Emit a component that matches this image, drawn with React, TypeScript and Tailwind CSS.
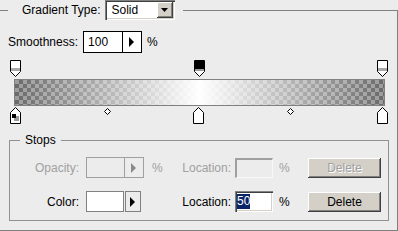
import React from 'react';

const sunken =
  'shadow-[inset_1px_1px_#808080,inset_2px_2px_#404040,inset_-1px_-1px_#fff,inset_-2px_-2px_#d4d0c8]';
const raised =
  'shadow-[inset_-1px_-1px_#404040,inset_1px_1px_#fff,inset_-2px_-2px_#808080]';

function TopStop({ selected }: { selected?: boolean }) {
  return (
    <svg width="11" height="17" viewBox="0 0 11 17">
      <path d="M0.5 0.5H10.5V11.5L5.5 16.5L0.5 11.5Z" fill="#fff" stroke="#000" />
      {selected ? (
        <>
          <rect x="1" y="1" width="9" height="8" fill="#000" />
          <rect x="1" y="9" width="9" height="2" fill="#9a9a9a" />
        </>
      ) : (
        <rect x="1" y="8" width="9" height="3" fill="#a8a8a8" />
      )}
    </svg>
  );
}

function BottomStop({ fg }: { fg?: boolean }) {
  return (
    <svg width="12" height="17" viewBox="0 0 12 17">
      <path d="M5.5 0.5L10.5 5.5V16.5H0.5V5.5Z" fill="#fff" stroke="#000" />
      {fg && (
        <>
          <rect x="4" y="9" width="5" height="5" fill="#999" />
          <rect x="2" y="7" width="4" height="4" fill="#000" />
        </>
      )}
    </svg>
  );
}

function Diamond() {
  return (
    <svg width="7" height="7" viewBox="0 0 7 7">
      <path d="M3.5 0.5L6.5 3.5L3.5 6.5L0.5 3.5Z" fill="#fff" stroke="#000" />
    </svg>
  );
}

function RightArrow({ color = '#000' }: { color?: string }) {
  return (
    <svg width="6" height="10" viewBox="0 0 6 10">
      <path d="M0 0L5 5L0 10Z" fill={color} />
    </svg>
  );
}

export default function App() {
  return (
    <div className="w-[398px] h-[231px] overflow-hidden bg-[#ececec] text-[12px] leading-[14px] text-black font-['Liberation_Sans',Arial,sans-serif]">
      <fieldset className="w-[398px] h-[231px] border-t border-r border-b border-[#808080]">
        <legend className="ml-[8px] pl-[14px] pr-[8px]">
          <div className="flex items-center h-[20px]">
            <span>Gradient Type:</span>
            <div className={`ml-[4px] w-[70px] h-[20px] bg-white flex items-center ${sunken}`}>
              <span className="flex-1 pl-[7px]">Solid</span>
              <div className={`w-[16px] h-[16px] mr-[2px] bg-[#d4d0c8] flex items-center justify-center ${raised}`}>
                <svg width="7" height="4" viewBox="0 0 7 4">
                  <path d="M0 0H7L3.5 4Z" fill="#000" />
                </svg>
              </div>
            </div>
          </div>
        </legend>

        {/* smoothness */}
        <div className="flex items-center pl-[8px] mt-[11px] h-[22px]">
          <span>Smoothness:</span>
          <div className="ml-[5px] w-[59px] h-[22px] bg-white border border-black flex">
            <span className="flex-1 pl-[4px] flex items-center">100</span>
            <div className="w-[19px] border-l border-black flex items-center justify-center">
              <RightArrow />
            </div>
          </div>
          <span className="ml-[5px]">%</span>
        </div>

        {/* gradient bar */}
        <div className="mt-[5px] flex flex-col">
          <div className="relative h-[21px]">
            <div className="absolute left-[10px] top-[2px] flex"><TopStop /></div>
            <div className="absolute left-[194px] top-[2px] flex"><TopStop selected /></div>
            <div className="absolute left-[377px] top-[2px] flex"><TopStop /></div>
          </div>
          <div className="ml-[14px] w-[371px] h-[27px] border border-[#808080] bg-[image:conic-gradient(#6a6a6a_90deg,#9c9c9c_90deg_180deg,#6a6a6a_180deg_270deg,#9c9c9c_270deg)] bg-[length:8px_8px]">
            <div className="w-full h-full bg-[image:linear-gradient(to_right,rgba(255,255,255,0),#fff_50%,rgba(255,255,255,0))]" />
          </div>
          <div className="relative h-[19px]">
            <div className="absolute left-[10px] top-[1px] flex"><BottomStop fg /></div>
            <div className="absolute left-[104px] top-[2px] flex"><Diamond /></div>
            <div className="absolute left-[193px] top-[1px] flex"><BottomStop /></div>
            <div className="absolute left-[287px] top-[2px] flex"><Diamond /></div>
            <div className="absolute left-[377px] top-[1px] flex"><BottomStop /></div>
          </div>
        </div>

        {/* stops */}
        <fieldset className="mt-[8px] ml-[9px] w-[380px] border border-[#919191] pb-[8px]">
          <legend className="ml-[10px] px-[5px]">Stops</legend>

          <div className="mt-[10px] flex items-center h-[21px] text-[#a0a0a0]">
            <span className="w-[69px] text-right">Opacity:</span>
            <div className="ml-[7px] w-[58px] h-[21px] border border-[#a0a0a0] flex">
              <span className="flex-1" />
              <div className="w-[19px] border-l border-[#a0a0a0] flex items-center justify-center">
                <RightArrow color="#8a8a8a" />
              </div>
            </div>
            <span className="w-[32px] pl-[8px]">%</span>
            <span className="w-[55px] text-right">Location:</span>
            <div className="ml-[4px] w-[38px] h-[20px] border-t-2 border-l-2 border-[#a0a0a0] border-r border-b border-r-[#f8f8f8] border-b-[#f8f8f8]" />
            <span className="w-[35px] pl-[6px]">%</span>
            <div className={`w-[73px] h-[20px] bg-[#d4d0c8] flex items-center justify-center text-[#a0a0a0] [text-shadow:1px_1px_0_#fff] ${raised}`}>
              Delete
            </div>
          </div>

          <div className="mt-[13px] flex items-center h-[21px]">
            <span className="w-[69px] text-right">Color:</span>
            <div className="ml-[7px] w-[58px] h-[21px] flex gap-[1px]">
              <div className="w-[38px] h-[21px] bg-white border border-[#808080]" />
              <div className="w-[16px] h-[21px] border border-[#808080] flex items-center justify-center">
                <RightArrow />
              </div>
            </div>
            <span className="w-[32px]" />
            <span className="w-[55px] text-right">Location:</span>
            <div className={`ml-[4px] w-[38px] h-[21px] bg-white flex items-center pl-[2px] ${sunken}`}>
              <span className="bg-[#0a246a] text-white leading-[15px]">50</span>
            </div>
            <span className="w-[35px] pl-[6px]">%</span>
            <div className={`w-[73px] h-[20px] bg-[#d4d0c8] flex items-center justify-center ${raised}`}>
              Delete
            </div>
          </div>
        </fieldset>
      </fieldset>
    </div>
  );
}
